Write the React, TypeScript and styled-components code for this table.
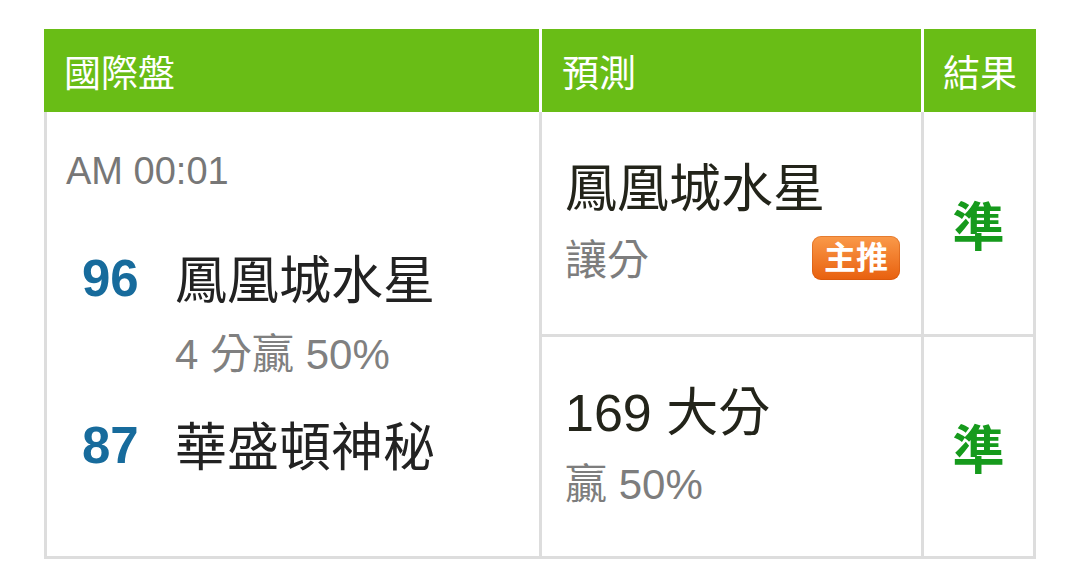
import React from 'react'
import styled, { createGlobalStyle } from 'styled-components'

const GlobalStyle = createGlobalStyle`
	html, body {
		margin: 0;
		padding: 0;
		background: #ffffff;
	}
	body {
		font-family: "Liberation Sans", "Noto Sans CJK TC", sans-serif;
	}
`

type Pick = {
	title: string
	sub: string
	hot?: boolean
	result: string
}

const picks: Pick[] = [
	{ title: '鳳凰城水星', sub: '讓分', hot: true, result: '準' },
	{ title: '169 大分', sub: '贏 50%', result: '準' },
]

export default function App() {
	return (
		<>
			<GlobalStyle />
			<Page>
				<Header>
					<HeadCell>國際盤</HeadCell>
					<HeadCell>預測</HeadCell>
					<HeadCell $center>結果</HeadCell>
				</Header>
				<Body>
					<MatchCell>
						<Time>AM 00:01</Time>
						<Team $top={65}>
							<Score>96</Score>
							<TeamName>鳳凰城水星</TeamName>
							<Odds>4 分贏 50%</Odds>
						</Team>
						<Team $top={46}>
							<Score>87</Score>
							<TeamName>華盛頓神秘</TeamName>
						</Team>
					</MatchCell>
					{picks.map((p, i) => (
						<React.Fragment key={i}>
							<PickCell>
								<PickTitle>{p.title}</PickTitle>
								<PickSub>
									<span>{p.sub}</span>
									{p.hot && <Badge>主推</Badge>}
								</PickSub>
							</PickCell>
							<ResultCell>{p.result}</ResultCell>
						</React.Fragment>
					))}
				</Body>
			</Page>
		</>
	)
}

const Page = styled.div`
	padding: 29px 0 0 44px;
	width: 992px;
`

const Header = styled.div`
	display: grid;
	grid-template-columns: 495px 379px 112px;
	column-gap: 3px;
	height: 83px;
`

const HeadCell = styled.div<{ $center?: boolean }>`
	background: #69bd16;
	color: #ffffff;
	font-size: 37px;
	display: flex;
	align-items: center;
	justify-content: ${(p) => (p.$center ? 'center' : 'flex-start')};
	padding-left: ${(p) => (p.$center ? '0' : '20px')};
`

const Body = styled.div`
	display: grid;
	grid-template-columns: 492px 379px 109px;
	grid-template-rows: 222px 219px;
	gap: 3px;
	padding: 0 3px 3px;
	background: #dddddd;
`

const MatchCell = styled.div`
	grid-row: 1 / span 2;
	background: #ffffff;
	padding: 40px 0 0 19px;
`

const Time = styled.div`
	font-size: 38px;
	line-height: 38px;
	color: #777777;
`

const Team = styled.div<{ $top: number }>`
	display: grid;
	grid-template-columns: 93px auto;
	align-items: center;
	margin-top: ${(p) => p.$top}px;
	padding-left: 16px;
`

const Score = styled.span`
	color: #176b9c;
	font-size: 51px;
	font-weight: bold;
	line-height: 52px;
	margin-top: -4px;
`

const TeamName = styled.span`
	font-size: 52px;
	line-height: 52px;
	color: #222222;
`

const Odds = styled.div`
	grid-column: 2;
	font-size: 42px;
	line-height: 42px;
	color: #808080;
	margin-top: 27px;
`

const PickCell = styled.div`
	background: #ffffff;
	display: flex;
	flex-direction: column;
	justify-content: center;
	gap: 24px;
	padding: 0 21px 0 23px;
`

const PickTitle = styled.div`
	font-size: 52px;
	line-height: 52px;
	color: #23241a;
`

const PickSub = styled.div`
	display: flex;
	justify-content: space-between;
	align-items: center;
	min-height: 44px;
	font-size: 42px;
	line-height: 42px;
	color: #7d7d7d;
`

const Badge = styled.span`
	display: inline-flex;
	align-items: center;
	justify-content: center;
	width: 88px;
	height: 44px;
	margin-top: -6px;
	border-radius: 9px;
	background: linear-gradient(#fa9a4a, #e8600e);
	box-shadow: inset 0 0 0 1px rgba(200, 80, 10, 0.4);
	color: #ffffff;
	font-size: 32px;
	font-weight: bold;
	line-height: 1;
`

const ResultCell = styled.div`
	background: #ffffff;
	display: flex;
	align-items: center;
	justify-content: center;
	font-size: 52px;
	font-weight: bold;
	color: #169a1c;
`
